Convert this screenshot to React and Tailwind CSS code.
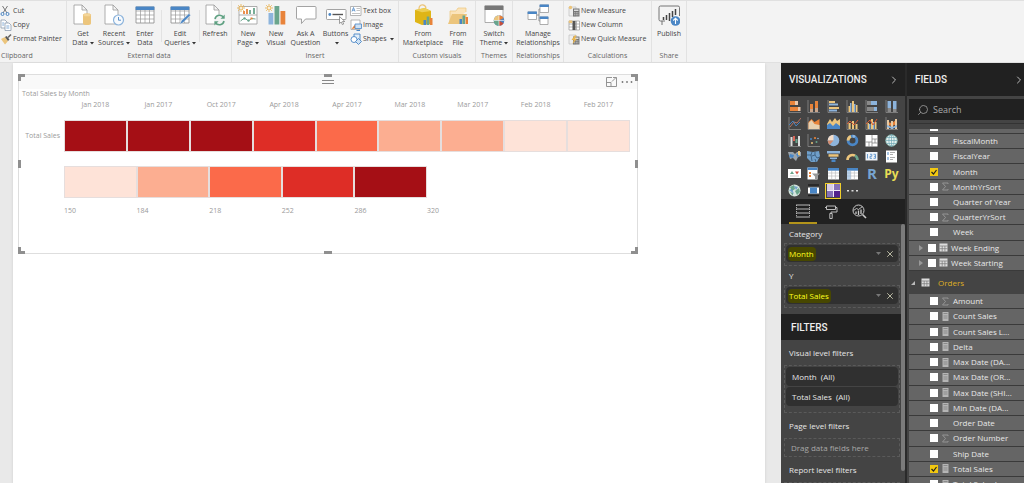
import { ChevronRight, Search, X } from "lucide-react";

const GREY = "#8a8a8a";
const BLUE = "#4a86c5";
const LIGHT_BLUE = "#8db4dc";
const ORANGE = "#e8833a";
const SAND = "#ecc57c";
const GREEN = "#6aa58c";

/* ---------- ribbon icons ---------- */

function PageShape({ x = 2 }) {
  return (
    <path d={`M${x} 1h8l5 5v14H${x}zM${x + 8} 1v5h5`} fill="#fff" stroke="#999" strokeWidth="0.8" />
  );
}

function BigIcon({ children }) {
  return (
    <svg viewBox="0 0 22 22" className="h-[22px] w-[22px] shrink-0" fill="none" aria-hidden="true">
      {children}
    </svg>
  );
}

function TableShape() {
  return (
    <>
      <path d="M2 3h18v16H2z" fill="#fff" stroke="#888" strokeWidth="0.8" />
      <path d="M2 7h18M2 11h18M2 15h18M6.500 3v16M11 3v16M15.500 3v16" stroke="#999" strokeWidth="0.7" />
      <path d="M1.600 2.500h18.800v3.500H1.600z" fill={BLUE} />
    </>
  );
}

function Spark() {
  return (
    <>
      <path d="M4 0v8M0 4h8M1.200 1.200l5.600 5.600M6.800 1.200L1.200 6.800" stroke="#e9b65a" strokeWidth="0.9" />
      <circle cx="4" cy="4" r="1.500" fill="#fff" stroke="#e9b65a" strokeWidth="0.7" />
    </>
  );
}

const bigIcons = {
  getData: (
    <>
      <PageShape />
      <path d="M11 11v8.500c0 2 8 2 8 0V11" fill={SAND} />
      <ellipse cx="15" cy="11" rx="4" ry="1.500" fill="#f4d79c" stroke={SAND} strokeWidth="0.6" />
    </>
  ),
  recent: (
    <>
      <PageShape />
      <circle cx="15.500" cy="16" r="5" fill="#f7fafd" stroke={LIGHT_BLUE} strokeWidth="1.200" />
      <path d="M15.500 13v3.200h2.500" stroke={BLUE} strokeWidth="0.9" />
    </>
  ),
  enter: <TableShape />,
  edit: (
    <>
      <TableShape />
      <path d="M10.500 20.500l2-4 7.500-7 1.600 1.700-7.500 7.400z" fill={BLUE} stroke="#f3f3f3" strokeWidth="0.5" />
    </>
  ),
  refresh: (
    <>
      <PageShape />
      <circle cx="15.500" cy="16" r="5.800" fill="#f3f3f3" />
      <path d="M11 15a4.600 4.600 0 0 1 8.600-1.300M20 17a4.600 4.600 0 0 1-8.600 1.300" stroke="#5fa182" strokeWidth="1.600" />
      <path d="M20.700 10.500v4.200h-4.200zM10.400 21.500v-4.200h4.200z" fill="#5fa182" />
    </>
  ),
  newPage: (
    <>
      <path d="M2 2.500h18v17.500H2zM2 11h18" fill="#fff" stroke="#999" strokeWidth="0.8" />
      <path d="M7 10V7M10 10V5" stroke={ORANGE} strokeWidth="1.800" />
      <path d="M13 10V6M17 10V4" stroke={GREEN} strokeWidth="1.800" />
      <path d="M3.500 17l4-3 4 3 3-2.500 4 .500" stroke={GREEN} strokeWidth="1" />
      <path d="M6.500 13.500h2v2h-2zM10.500 15.500h2v2h-2z" fill={GREEN} />
      <path d="M13.500 13.500h2v2h-2z" fill={ORANGE} />
      <Spark />
    </>
  ),
  newVisual: (
    <>
      <path d="M3.500 9h4.800v11.500H3.500z" fill={LIGHT_BLUE} />
      <path d="M9.500 2h4.800v18.500H9.500z" fill={GREEN} />
      <path d="M15.500 7h4.800v13.500h-4.800z" fill={ORANGE} />
      <Spark />
    </>
  ),
  ask: (
    <path d="M2.500 2.500h17.500q1 0 1 1V14q0 1-1 1H10.500L6.500 19.500V15H2.500q-1 0-1-1V3.500q0-1 1-1z" fill="#fff" stroke="#999" strokeWidth="0.9" />
  ),
  buttons: (
    <>
      <rect x="1.500" y="5.500" width="19.500" height="10" rx="0.8" fill="#fff" stroke="#999" strokeWidth="0.9" />
      <circle cx="4.800" cy="10.500" r="1.400" fill={BLUE} />
      <path d="M7.500 10.500H18" stroke="#555" strokeWidth="1.400" />
      <path d="M14.500 12.500v7l1.700-1.500 1.200 2.600 1.300-.6-1.200-2.500h2.300z" fill="#fff" stroke="#777" strokeWidth="0.7" />
    </>
  ),
  marketplace: (
    <>
      <path d="M7 5c0-5 6-5.500 7-1" stroke={SAND} strokeWidth="1.300" />
      <path d="M3 6l10-2 6 3v13l-9 1L3 18z" fill="#dfb516" />
      <path d="M3 6l10-2 6 3-9 1.200z" fill="#edcf55" />
      <path d="M11.500 21v-5h2.600v5z" fill={BLUE} />
      <path d="M14.700 21v-8.500h2.600V21z" fill={GREEN} />
      <path d="M17.900 21v-7h2.600v7z" fill={ORANGE} />
    </>
  ),
  file: (
    <>
      <path d="M3 19V7h6l2-3h8v4" fill="#fbe4bb" stroke={SAND} strokeWidth="0.7" />
      <path d="M1 20l4-10h15l-3 10z" fill={SAND} />
      <path d="M12.500 20v-5H15v5z" fill={BLUE} />
      <path d="M15.500 20v-8.500H18V20z" fill={GREEN} />
      <path d="M18.500 20v-7H21v7z" fill={ORANGE} />
    </>
  ),
  theme: (
    <>
      <path d="M2 2h18v16.500H2z" fill="#fff" stroke="#999" strokeWidth="0.8" />
      <path d="M1.600 1.600h18.800V6H1.600z" fill="#777" />
      <circle cx="16" cy="16.500" r="5.300" fill={BLUE} />
      <path d="M16 16.500V11.200a5.300 5.300 0 0 0-5.300 5.300z" fill={SAND} />
      <path d="M16 16.500h-5.300A5.300 5.300 0 0 0 16 21.800z" fill={GREEN} />
      <path d="M16 16.500V11.200a5.300 5.300 0 0 1 4.600 2.700z" fill={ORANGE} />
      <path d="M16 16.500l4.600 2.700A5.300 5.300 0 0 1 16 21.800z" fill="#c84e3b" />
      <path d="M16 11v11M10.700 16.500h10.600" stroke="#fff" strokeWidth="0.6" />
    </>
  ),
  relations: (
    <>
      <path d="M9 11h3V5h2M12 11v6h2" stroke="#888" strokeWidth="0.9" />
      <path d="M1 8h8.500v7.500H1zM13 1h8.500v7.500H13zM13 13h8v7.500h-8z" fill="#fff" stroke="#999" strokeWidth="0.8" />
      <path d="M.600 7.500h9.300V10H.600zM12.600.500h9.300V3h-9.300zM12.600 12.500h8.800V15h-8.800z" fill={BLUE} />
    </>
  ),
  publish: (
    <>
      <path d="M7 17H4v4M4 17H2.500Q1 17 1 15.500V3.500Q1 2 2.500 2H20q1.500 0 1.500 1.500V12" stroke="#666" strokeWidth="0.9" />
      <path d="M5.500 16v-3M8.500 16v-5M11.500 17V9M14.500 13V7M17.500 11V5" stroke="#444" strokeWidth="1.500" />
      <circle cx="17.500" cy="17" r="4.800" fill={BLUE} />
      <path d="M17.500 20v-5.500M15.300 16.500l2.200-2.300 2.200 2.300" stroke="#fff" strokeWidth="1.100" />
    </>
  ),
};

function SmallIcon({ children }) {
  return (
    <svg viewBox="0 0 12 12" className="h-3 w-3 shrink-0" fill="none" aria-hidden="true">
      {children}
    </svg>
  );
}

const calculator = (
  <>
    <path d="M5 3.500h6.500v8H5z" fill="#777" />
    <path d="M6 4.500h4.500v1.500H6z" fill="#ddd" />
    <path d="M6.200 7.800h4.300M6.200 9.800h4.300" stroke="#ddd" strokeWidth="0.9" strokeDasharray="1 .6" />
  </>
);

const smallIcons = {
  cut: (
    <>
      <path d="M2.500 1l4.500 7M7.500 1L3 8" stroke="#777" strokeWidth="1" />
      <circle cx="2.500" cy="9" r="1.500" stroke={BLUE} strokeWidth="1" />
      <circle cx="7.500" cy="9" r="1.500" stroke={BLUE} strokeWidth="1" />
    </>
  ),
  copy: (
    <>
      <path d="M1 1h4l2 2v6H1z" fill="#fff" stroke="#7f8fa5" strokeWidth="0.7" />
      <path d="M5 4h4l2 2v5.500H5z" fill="#fff" stroke="#7f8fa5" strokeWidth="0.7" />
      <path d="M2.200 4h2M2.200 6h2M6.300 7h3M6.300 9h3" stroke={BLUE} strokeWidth="0.7" />
    </>
  ),
  painter: (
    <>
      <path d="M1 6l4-2 3 4-3 3.500z" fill={SAND} />
      <path d="M5 4l1.500-1 3 3.500L8 8z" fill="#555" />
      <path d="M8 4.500L11 1.500" stroke="#666" strokeWidth="1.600" />
    </>
  ),
  textbox: (
    <>
      <path d="M.500 1.500h10.500v9H.500z" fill="#fff" stroke="#999" strokeWidth="0.7" />
      <path d="M2 6.500l1.500-4 1.500 4M2.500 5.200h2" stroke={BLUE} strokeWidth="0.8" />
      <path d="M6.500 3.500h3.500M6.500 5.500h3.500M2 8.500h8" stroke="#aaa" strokeWidth="0.7" />
    </>
  ),
  image: (
    <>
      <path d="M1 1h9v9.500H1z" fill="#fff" stroke="#999" strokeWidth="0.7" />
      <path d="M1.500 10l3-4 2.500 3z" fill={ORANGE} />
      <path d="M5 5h6.500v4.500H5z" fill="#cfe2f4" stroke={BLUE} strokeWidth="0.8" />
      <path d="M6.500 11.500h3.500" stroke={BLUE} />
    </>
  ),
  shapes: (
    <>
      <path d="M4 1h6v6H4z" fill="#e3eef8" stroke={BLUE} strokeWidth="0.9" />
      <circle cx="4" cy="6.500" r="3" fill="#fff" stroke={BLUE} strokeWidth="0.9" />
      <path d="M8.500 5.500l3 3-3 3-3-3z" fill="#cfe2f4" stroke={BLUE} strokeWidth="0.9" />
    </>
  ),
  measure: (
    <>
      <path d="M1 2h7v9H1z" fill="#eee" stroke="#bbb" strokeWidth="0.6" />
      <circle cx="2.500" cy="2.500" r="1.700" fill={SAND} />
      {calculator}
    </>
  ),
  column: (
    <>
      <path d="M1 2h10.500v9H1zM1 5h10.500M1 8h10.500M8.500 2v9" fill="#fff" stroke="#999" strokeWidth="0.7" />
      <path d="M4.500 2h3v9h-3z" fill="#555" />
      <path d="M.800 1.500h3.400V4H.800z" fill={SAND} />
    </>
  ),
  quick: (
    <>
      <path d="M1 2h7v9H1z" fill="#eee" stroke="#bbb" strokeWidth="0.6" />
      {calculator}
      <path d="M6.500 2.500L3.500 7h2.200L4.500 11 9 5.800H6.800L8.500 2.500z" fill="#eab64f" />
    </>
  ),
};

/* ---------- ribbon ---------- */

function Caret() {
  return (
    <svg viewBox="0 0 4 3" className="ml-0.5 inline-block h-[3px] w-1 align-middle" aria-hidden="true">
      <path d="M0 0h4L2 2.500z" fill="#333" />
    </svg>
  );
}

function BigButton({ icon, lines, caret, width }) {
  return (
    <button type="button" className={`flex flex-col items-center ${width}`}>
      <BigIcon>{bigIcons[icon]}</BigIcon>
      <span className="mt-[3px] text-center leading-[9px] whitespace-nowrap">
        {lines[0]}
        <br />
        {lines[1]}
        {caret && <Caret />}
      </span>
    </button>
  );
}

function SmallButton({ icon, label, caret }) {
  return (
    <button type="button" className="flex h-3.5 items-center gap-px whitespace-nowrap">
      <SmallIcon>{smallIcons[icon]}</SmallIcon>
      <span>{label}</span>
      {caret && <Caret />}
    </button>
  );
}

function RibbonGroup({ label, width, align = "text-center", children }) {
  return (
    <div className={`flex shrink-0 flex-col justify-between border-r border-[#e2e2e2] ${width}`}>
      <div className="flex justify-center pt-[3px]">{children}</div>
      <div className={`h-[11px] leading-[10px] text-[#666] ${align}`}>{label}</div>
    </div>
  );
}

function Divider() {
  return <div className="mt-1.5 h-8 w-px bg-[#e2e2e2]" />;
}

function Ribbon() {
  return (
    <header className="flex h-[63px] shrink-0 overflow-hidden border-y border-[#e0e0e0] bg-[#f3f3f3] text-[7px] text-[#444]">
      <RibbonGroup label="Clipboard" width="w-[67px]" align="pl-px text-left">
        <div className="flex flex-1 flex-col">
          <SmallButton icon="cut" label="Cut" />
          <SmallButton icon="copy" label="Copy" />
          <SmallButton icon="painter" label="Format Painter" />
        </div>
      </RibbonGroup>
      <RibbonGroup label="External data" width="w-[165px]">
        <BigButton icon="getData" lines={["Get", "Data"]} caret width="w-[31px]" />
        <BigButton icon="recent" lines={["Recent", "Sources"]} caret width="w-[31px]" />
        <BigButton icon="enter" lines={["Enter", "Data"]} width="w-[31px]" />
        <Divider />
        <BigButton icon="edit" lines={["Edit", "Queries"]} caret width="w-[37px]" />
        <Divider />
        <BigButton icon="refresh" lines={["Refresh", ""]} width="w-[31px]" />
      </RibbonGroup>
      <RibbonGroup label="Insert" width="w-[167px]">
        <BigButton icon="newPage" lines={["New", "Page"]} caret width="w-[28px]" />
        <BigButton icon="newVisual" lines={["New", "Visual"]} width="w-[28px]" />
        <BigButton icon="ask" lines={["Ask A", "Question"]} width="w-[31px]" />
        <BigButton icon="buttons" lines={["Buttons", ""]} caret width="w-[29px]" />
        <div className="flex w-[46px] flex-col">
          <SmallButton icon="textbox" label="Text box" />
          <SmallButton icon="image" label="Image" />
          <SmallButton icon="shapes" label="Shapes" caret />
        </div>
      </RibbonGroup>
      <RibbonGroup label="Custom visuals" width="w-[77px]">
        <BigButton icon="marketplace" lines={["From", "Marketplace"]} width="w-[42px]" />
        <BigButton icon="file" lines={["From", "File"]} width="w-[28px]" />
      </RibbonGroup>
      <RibbonGroup label="Themes" width="w-[37px]">
        <BigButton icon="theme" lines={["Switch", "Theme"]} caret width="w-[31px]" />
      </RibbonGroup>
      <RibbonGroup label="Relationships" width="w-[51px]">
        <BigButton icon="relations" lines={["Manage", "Relationships"]} width="w-[46px]" />
      </RibbonGroup>
      <RibbonGroup label="Calculations" width="w-[88px]">
        <div className="flex flex-1 flex-col pl-1">
          <SmallButton icon="measure" label="New Measure" />
          <SmallButton icon="column" label="New Column" />
          <SmallButton icon="quick" label="New Quick Measure" />
        </div>
      </RibbonGroup>
      <RibbonGroup label="Share" width="w-[35px]">
        <BigButton icon="publish" lines={["Publish", ""]} width="w-[31px]" />
      </RibbonGroup>
    </header>
  );
}

/* ---------- heat map visual ---------- */

const months = [
  { label: "Jan 2018", fill: "bg-[#a50f15]" },
  { label: "Jan 2017", fill: "bg-[#a50f15]" },
  { label: "Oct 2017", fill: "bg-[#a50f15]" },
  { label: "Apr 2018", fill: "bg-[#de2d26]" },
  { label: "Apr 2017", fill: "bg-[#fb6a4a]" },
  { label: "Mar 2018", fill: "bg-[#fcae91]" },
  { label: "Mar 2017", fill: "bg-[#fcae91]" },
  { label: "Feb 2018", fill: "bg-[#fee3d8]" },
  { label: "Feb 2017", fill: "bg-[#fee3d8]" },
];

const scale = [
  { from: 150, fill: "bg-[#fee3d8]" },
  { from: 184, fill: "bg-[#fcae91]" },
  { from: 218, fill: "bg-[#fb6a4a]" },
  { from: 252, fill: "bg-[#de2d26]" },
  { from: 286, fill: "bg-[#a50f15]" },
];

const handles = [
  "-top-px -left-px h-[7px] w-[7px] border-t-3 border-l-3",
  "-top-px -right-px h-[7px] w-[7px] border-t-3 border-r-3",
  "-bottom-px -left-px h-[7px] w-[7px] border-b-3 border-l-3",
  "-bottom-px -right-px h-[7px] w-[7px] border-b-3 border-r-3",
  "-top-px left-1/2 w-2 -translate-x-1/2 border-t-3",
  "-bottom-px left-1/2 w-2 -translate-x-1/2 border-b-3",
  "top-1/2 -left-px h-2 -translate-y-1/2 border-l-3",
  "top-1/2 -right-px h-2 -translate-y-1/2 border-r-3",
];

function HeatMap() {
  return (
    <article className="relative flex h-[180px] w-[620px] max-w-full flex-col border border-[#dedede] bg-white text-[7px] leading-[10px] text-[#9a9a9a]">
      {handles.map((place) => (
        <span key={place} className={`absolute border-[#8f8f8f] ${place}`} />
      ))}
      <div className="grid h-3.5 shrink-0 grid-cols-3 items-center bg-[#f9f9f9]">
        <div className="col-start-2 h-1 w-3 justify-self-center border-y border-[#888]" />
        <div className="flex items-center gap-1 justify-self-end pr-1">
          <button type="button" aria-label="Focus mode">
            <svg viewBox="0 0 11 10" className="h-2.5 w-[11px]" fill="none" stroke="#888" strokeWidth="0.9">
              <path d="M6 .500H.500v9h10V4M.500 5.500H5v4M6 4.500l4-4M7 .500h3.500V4" />
            </svg>
          </button>
          <button type="button" aria-label="More options">
            <svg viewBox="0 0 12 10" className="h-2.5 w-3" fill="#777">
              <circle cx="1.500" cy="5" r="0.9" />
              <circle cx="6" cy="5" r="0.9" />
              <circle cx="10.500" cy="5" r="0.9" />
            </svg>
          </button>
        </div>
      </div>
      <h2 className="pl-[3px]">Total Sales by Month</h2>
      <div className="grid grid-cols-[45px_1fr] pr-[7px]">
        <div className="col-start-2 grid grid-cols-9 pt-px text-center">
          {months.map((m) => (
            <span key={m.label}>{m.label}</span>
          ))}
        </div>
        <span className="mt-2.5 self-center pr-1 text-right whitespace-nowrap">Total Sales</span>
        <div className="mt-2.5 grid h-8 grid-cols-9">
          {months.map((m) => (
            <div key={m.label} className={`border border-[#e6dedd] ${m.fill}`} />
          ))}
        </div>
        <div className="col-start-2 mt-3.5 flex h-8 w-[363px]">
          {scale.map((s) => (
            <div key={s.from} className={`flex-1 border border-[#e6dedd] ${s.fill}`} />
          ))}
        </div>
        <div className="col-start-2 mt-2 flex w-[363px]">
          {scale.map((s) => (
            <span key={s.from} className="flex-1">
              {s.from}
            </span>
          ))}
          <span className="w-0">320</span>
        </div>
      </div>
    </article>
  );
}

/* ---------- visualizations pane ---------- */

const axis = <path d="M1 0v12.500h12" stroke="#8c8c8c" strokeWidth="0.8" />;
const grid = (
  <>
    <path d="M1 1h11v11.500H1z" fill="#fff" />
    <path d="M1 6h11M1 9h11M4.700 3.500v9M8.400 3.500v9" stroke="#b5b5b5" strokeWidth="0.6" />
    <path d="M1 1h11v2.700H1z" fill={BLUE} />
  </>
);

const visuals = [
  ["Stacked bar chart", <>{axis}<path d="M2 1h5v4H2zM2 7h8v4H2z" fill={ORANGE} /><path d="M7 1h3v4H7zM10 7h2.500v4H10z" fill="#e9c8ad" /></>],
  ["Stacked column chart", <>{axis}<path d="M3 4h3v5H3zM8 1h3v8H8z" fill={ORANGE} /><path d="M3 9h3v3H3zM8 8h3v4H8z" fill="#c9a58b" /></>],
  ["Clustered bar chart", <>{axis}<path d="M2 1h6v2H2zM2 7h10v2H2z" fill={SAND} /><path d="M2 3.500h9v2H2zM2 9.500h8v2H2z" fill={LIGHT_BLUE} /></>],
  ["Clustered column chart", <>{axis}<path d="M2.500 6H4v6H2.500zM6 1h2v11H6zM10 5h1.500v7H10z" fill={SAND} /><path d="M4 3h1.500v9H4zM8 4h1.500v8H8z" fill={LIGHT_BLUE} /></>],
  ["100% stacked bar chart", <>{axis}<path d="M2 1h4v4H2zM2 7h7v4H2z" fill={GREY} /><path d="M6 1h6v4H6zM9 7h3v4H9z" fill={LIGHT_BLUE} /></>],
  ["100% stacked column chart", <>{axis}<path d="M2.500 1H6v7H2.500zM8 1h3.500v8H8z" fill={LIGHT_BLUE} /><path d="M2.500 8H6v4H2.500zM8 9h3.500v3H8z" fill={GREY} /></>],
  ["Line chart", <>{axis}<path d="M2 10l4-5 3 1 4-5" stroke="#c07868" strokeWidth="0.9" /><path d="M1 8l4-4 3 5 4-4" stroke={BLUE} strokeWidth="0.9" /></>],
  ["Area chart", <>{axis}<path d="M1.500 12V5l3-3 3 3 5-3v10z" fill={ORANGE} /><path d="M1.500 12V6l3-3 3 4 5 1v4z" fill="#e7d0b0" /></>],
  ["Stacked area chart", <><path d="M0 7l3-5 2 3 3-4 2 3 3-2v7H0z" fill={SAND} /><path d="M0 12V8l3-2 3 3 3-3 4 3v3z" fill={BLUE} /></>],
  ["Line and stacked column chart", <>{axis}<path d="M2.500 6h2.200v6H2.500zM6 4h2v8H6zM9.500 7h2v5h-2z" fill={SAND} /><path d="M1 7l3-3 4 4 4-5" stroke="#d85c35" /></>],
  ["Line and clustered column chart", <>{axis}<path d="M2.500 6H4v6H2.500zM6 2h2v10H6zM10 5h1.500v7H10z" fill={SAND} /><path d="M4 7h1.500v5H4zM8 5h1.500v7H8z" fill={LIGHT_BLUE} /><path d="M1 7l4-4 3 5 4-6" stroke="#d85c35" /></>],
  ["Ribbon chart", <>{axis}<path d="M2 5l5 1 5-4v5L7 9 2 8z" fill={ORANGE} /><path d="M2 3h2v9H2zM6 4h2v8H6zM10 2h2v10h-2z" fill="#e7c9a2" /><path d="M2 8l5 2 5-2v2l-5 2-5-2z" fill={LIGHT_BLUE} /></>],
  ["Waterfall chart", <>{axis}<path d="M2.500 3h2v9h-2z" fill="#ddd" /><path d="M5 2h2v5H5z" fill="#d8675a" /><path d="M7.500 5h2v4h-2z" fill={GREEN} /><path d="M10 2h2v10h-2z" fill="#ddd" /></>],
  ["Scatter chart", <>{axis}<circle cx="4" cy="5" r="1" fill={BLUE} /><circle cx="8" cy="4" r="1.100" fill={ORANGE} /><circle cx="5" cy="9" r="1" fill={SAND} /><circle cx="9.500" cy="8" r="1" fill={GREEN} /><circle cx="11" cy="4.500" r="0.8" fill={LIGHT_BLUE} /></>],
  ["Pie chart", <><circle cx="6.500" cy="6.500" r="5.800" fill={LIGHT_BLUE} /><path d="M6.500 6.500V.700A5.800 5.800 0 0 0 .700 6.500z" fill="#f3dcc8" /><path d="M6.500 6.500H.700a5.800 5.800 0 0 0 2 4.300z" fill="#d28b6e" /></>],
  ["Donut chart", <><circle cx="6.500" cy="6.500" r="4.400" stroke={BLUE} strokeWidth="2.800" /><path d="M2.100 6.500A4.400 4.400 0 0 1 5 2.400" stroke={SAND} strokeWidth="2.800" /><path d="M6.500 2.100A4.400 4.400 0 0 1 9 3" stroke={LIGHT_BLUE} strokeWidth="2.800" /></>],
  ["Treemap", <><path d="M.500 1h12v11.500H.500z" fill="#fff" /><path d="M7 1v11.500M.500 8H7M7 5h5.500M7 9h5.500M10 5v4M4 8v4.500" stroke="#777" strokeWidth="0.7" /></>],
  ["Map", <><circle cx="6.500" cy="6.500" r="5.800" fill="#e4f0ef" stroke="#7fb0a6" strokeWidth="0.8" /><ellipse cx="6.500" cy="6.500" rx="2.600" ry="5.800" stroke="#6fa7b5" strokeWidth="0.7" /><path d="M.700 6.500h11.600M1.700 3.500h9.600M1.700 9.500h9.600M6.500.700v11.600" stroke="#6fa7b5" strokeWidth="0.7" /></>],
  ["Filled map", <><path d="M0 2h5l2 2 2-2h4v4l-3 1-2 4-3-3-3 1z" fill="#9ca4ab" /><path d="M2 4l4 1-1 3-4-1zM8 4l3-1-1 5z" fill={BLUE} /><path d="M10 1h2v4h-2z" fill={SAND} /></>],
  ["Shape map", <><path d="M0 1l6 1 6-1 1 5-3 6H4L0 8z" fill="#6f9fca" /><path d="M0 5h4l1-3M5 6l3-1 2 3 3-1M4 5l1 6M8 2v3M8 9l1 3" stroke="#3d5e7d" strokeWidth="0.9" /></>],
  ["Funnel", <><path d="M0 1h13v2.500H0zM3 7.500h7V9H3z" fill={LIGHT_BLUE} /><path d="M1.500 4.200h10v2.500h-10z" fill={SAND} /><path d="M4.500 9.500h4V12h-4z" fill={BLUE} /></>],
  ["Gauge", <><path d="M1.500 10a5 5 0 0 1 7.500-4.300" stroke={SAND} strokeWidth="2.600" /><path d="M9 5.700A5 5 0 0 1 11.500 10" stroke={GREEN} strokeWidth="2.600" /></>],
  ["Card", <><path d="M.500 2h12v8.500H.500z" fill="#eef3f8" /><path d="M2.500 4v4.500M5 4.300h1.800v2H5v2h2M8.500 4.300h2v4h-2M9 6.300h1.500" stroke={BLUE} strokeWidth="0.8" /></>],
  ["Multi-row card", <><path d="M1 .500h11v12H1z" fill="#fff" /><path d="M3 2v3M3 7v3" stroke={BLUE} /><path d="M5 2.500h5M5 4.500h3M5 7.500h5M5 9.500h3" stroke="#999" strokeWidth="0.8" /></>],
  ["KPI", <><path d="M0 2h13v9H0z" fill="#fff" /><path d="M2 7l2-3 2 3z" fill={GREEN} /><path d="M7 4.500h4L9 7.500z" fill="#d25145" /><path d="M2 9h9" stroke="#bbb" strokeWidth="0.8" /></>],
  ["Slicer", <><path d="M.500.500h10v12H.500z" fill="#fff" /><path d="M.500.500h10V3H.500z" fill={BLUE} /><path d="M2 5h2v2H2zM2 8h2v2H2z" fill={ORANGE} /><path d="M5 6.500h8L10 9.500V13L8 12V9.500z" fill="#999" /></>],
  ["Table", grid],
  ["Matrix", <>{grid}<path d="M1 3.700h3.700v8.800H1z" fill={LIGHT_BLUE} opacity="0.6" /></>],
  ["R script visual", "R"],
  ["Python visual", "Py"],
  ["ArcGIS map", <><circle cx="6.500" cy="6.500" r="6" fill="#d5e5dd" /><path d="M2 3l4-2 1 4-3 2zM7 7l4-3 1 4-3 3zM2 8l3 1v3z" fill={GREEN} /><path d="M6 2l4 1-2 3zM1 6l3-1 2 5z" fill={BLUE} opacity="0.7" /></>],
  ["Custom filter", <><path d="M1 1h11M1 11.500h11" stroke="#222" strokeWidth="1.500" /><path d="M1 3.500h11v6H1z" fill="#fff" /><path d="M3 3.500h7v6H3z" fill={BLUE} /></>],
  ["Heat map", <><path d="M0 0h13v13H0z" fill="#efeaf6" /><path d="M0 0h6v6H0z" fill="#d7cde8" /><path d="M7 0h6v6H7zM0 7h6v6H0z" fill="#8672b8" /><path d="M7 7h6v6H7z" fill="#52238c" /></>],
  ["Import a custom visual", <path d="M1 6h2v1.500H1zM5.500 6h2v1.500h-2zM10 6h2v1.500h-2z" fill="#ddd" />],
];

function VisualButton({ name, icon }) {
  let face;
  if (icon === "R") {
    face = <span className="text-[15px] leading-none font-bold text-[#78a5d0]">R</span>;
  } else if (icon === "Py") {
    face = <span className="text-[12px] leading-none font-bold text-[#e8dc55]">Py</span>;
  } else {
    face = (
      <svg viewBox="0 0 13 13" className="h-[13px] w-[13px]" fill="none" aria-hidden="true">
        {icon}
      </svg>
    );
  }
  const selected = name === "Heat map" ? "outline outline-[#f0cf2c]" : "";
  return (
    <button
      type="button"
      aria-label={name}
      className={`flex h-3.5 w-3.5 items-center justify-center place-self-center ${selected}`}
    >
      {face}
    </button>
  );
}

function PaneHeader({ title }) {
  return (
    <div className="flex h-[33px] shrink-0 items-center justify-between bg-[#212121] pr-[5px] pl-2">
      <h2 className="font-[Roboto,sans-serif] text-[10px] font-medium text-[#eee]">{title}</h2>
      <button type="button" aria-label={`Collapse ${title}`}>
        <ChevronRight size={12} strokeWidth={2} className="text-[#bbb]" />
      </button>
    </div>
  );
}

function Well({ name }) {
  return (
    <div className="mr-px ml-[3px] shrink-0 border border-dashed border-[#5a5a5a] px-px pt-px pb-[3px]">
      <div className="flex h-[17px] items-center rounded-sm bg-[#303030] pr-[3px] pl-0.5">
        <span className="rounded-sm bg-[#474700] py-0.5 pr-0.5 pl-px leading-[10px] text-[#ffff1e]">{name}</span>
        <button type="button" aria-label={`${name} options`} className="ml-auto">
          <svg viewBox="0 0 5 3" className="h-[3px] w-[5px]">
            <path d="M0 0h5L2.500 3z" fill="#777" />
          </svg>
        </button>
        <button type="button" aria-label={`Remove ${name}`} className="ml-1">
          <X size={10} strokeWidth={2.2} className="text-[#c4c4ac]" />
        </button>
      </div>
    </div>
  );
}

function PaneLabel({ children }) {
  return <h3 className="flex h-[19px] shrink-0 items-center pl-2">{children}</h3>;
}

function Visualizations() {
  return (
    <section className="flex w-[124px] shrink-0 flex-col overflow-hidden bg-[#444] text-[8px] text-[#e6e6e6]">
      <PaneHeader title="VISUALIZATIONS" />
      <div className="grid h-[103px] shrink-0 grid-cols-6 grid-rows-6 px-1 pt-0.5">
        {visuals.map(([name, icon]) => (
          <VisualButton key={name} name={name} icon={icon} />
        ))}
      </div>
      <div className="flex h-[25px] shrink-0 bg-[#212121] pl-2">
        <button type="button" aria-label="Fields" className="flex w-7 items-center justify-center border-b-2 border-[#b3941b]">
          <svg viewBox="0 0 14 14" className="h-3.5 w-3.5" fill="none" stroke="#ccc">
            <path d="M0 1h14M0 5h14M0 9h14M0 13h14" strokeWidth="0.9" />
            <path d="M.500 1v12M13.500 1v12" strokeWidth="0.8" strokeDasharray="1 1" />
          </svg>
        </button>
        <button type="button" aria-label="Format" className="flex w-7 items-center justify-center">
          <svg viewBox="0 0 14 14" className="h-3.5 w-3.5" fill="none" stroke="#ccc" strokeWidth="0.9">
            <path d="M2.500 1h9v3.500h-9zM11.500 2.500H13V7H7v1.500M5.800 8.500h2.400v5H5.800zM2.500 2.500H1" />
          </svg>
        </button>
        <button type="button" aria-label="Analytics" className="flex w-7 items-center justify-center">
          <svg viewBox="0 0 15 15" className="h-[15px] w-[15px]" fill="none" stroke="#ccc">
            <circle cx="6.500" cy="6.500" r="5.500" strokeWidth="1" />
            <path d="M10.500 10.500L14 14" strokeWidth="1.600" />
            <path d="M4 10V7.500M6.500 11V6.500M9 10V5.500" strokeWidth="1.300" />
            <path d="M1.500 6.500l3-2 2 1 4-3" strokeWidth="0.9" />
          </svg>
        </button>
      </div>
      <div className="flex min-h-0 flex-1">
        <div className="flex min-w-0 flex-1 flex-col overflow-hidden">
          <PaneLabel>Category</PaneLabel>
          <Well name="Month" />
          <PaneLabel>Y</PaneLabel>
          <Well name="Total Sales" />
          <h2 className="mt-1.5 mb-[3px] flex h-[26px] shrink-0 items-center bg-[#212121] pl-2.5 font-[Roboto,sans-serif] text-[10px] font-medium text-[#eee]">
            FILTERS
          </h2>
          <PaneLabel>Visual level filters</PaneLabel>
          <div className="mt-[3px] mr-px mb-[3px] ml-[3px] flex shrink-0 flex-col gap-px border border-dashed border-[#5a5a5a] px-px pt-px pb-1.5">
            {["Month", "Total Sales"].map((name) => (
              <button key={name} type="button" className="flex h-[19px] shrink-0 items-center rounded-sm bg-[#303030] pl-1.5">
                {name}&nbsp; (All)
              </button>
            ))}
          </div>
          <PaneLabel>Page level filters</PaneLabel>
          <div className="mt-[3px] mr-px mb-[3px] ml-[3px] flex h-[19px] shrink-0 items-center border border-dashed border-[#5a5a5a] pl-1.5 text-[#a8a8a8]">
            Drag data fields here
          </div>
          <PaneLabel>Report level filters</PaneLabel>
          <div className="mt-[3px] mr-px ml-[3px] h-[19px] shrink-0 border border-dashed border-[#5a5a5a]" />
        </div>
        <div className="mb-3 w-1 shrink-0 rounded-full bg-[#7b7b7b]" />
      </div>
    </section>
  );
}

/* ---------- fields pane ---------- */

const dateFields = [
  { name: "FiscalMonth" },
  { name: "FiscalYear" },
  { name: "Month", checked: true },
  { name: "MonthYrSort", icon: "sum" },
  { name: "Quarter of Year" },
  { name: "QuarterYrSort", icon: "sum" },
  { name: "Week" },
  { name: "Week Ending", icon: "table" },
  { name: "Week Starting", icon: "table" },
];

const orderFields = [
  { name: "Amount", icon: "sum" },
  { name: "Count Sales", icon: "measure" },
  { name: "Count Sales L...", icon: "measure" },
  { name: "Delta", icon: "measure" },
  { name: "Max Date (DA...", icon: "measure" },
  { name: "Max Date (OR...", icon: "measure" },
  { name: "Max Date (SHI...", icon: "measure" },
  { name: "Min Date (DA...", icon: "measure" },
  { name: "Order Date" },
  { name: "Order Number", icon: "sum" },
  { name: "Ship Date" },
  { name: "Total Sales", icon: "measure", checked: true },
];

const fieldIcons = {
  sum: <path d="M7 2V1H1.500L4.500 4.500 1.500 8H7V7" fill="none" stroke="#999" strokeWidth="0.9" />,
  measure: (
    <>
      <path d="M1.500 0h6v9h-6z" fill="#b5b5b5" />
      <path d="M2.500 1.500h4M2.500 4h4M2.500 6h4" stroke="#777" strokeWidth="0.7" />
    </>
  ),
  table: (
    <>
      <path d="M.500.500h8v8h-8z" fill="#ddd" />
      <path d="M.500 3h8M.500 5.700h8M3.200 3v5.500M5.900 3v5.500" stroke="#777" strokeWidth="0.7" />
    </>
  ),
};

function FieldIcon({ kind }) {
  return (
    <svg viewBox="0 0 9 9" className="h-[9px] w-[9px] shrink-0" aria-hidden="true">
      {fieldIcons[kind]}
    </svg>
  );
}

function FieldRow({ name, icon, checked }) {
  const nested = icon === "table";
  return (
    <li className="flex min-h-0 items-center border-b border-[#3a3a3a] bg-[#656565] whitespace-nowrap">
      <span className={`flex shrink-0 items-center pl-2.5 ${nested ? "w-[19px]" : "w-[21px]"}`}>
        {nested && (
          <svg viewBox="0 0 4 6" className="h-1.5 w-1">
            <path d="M0 0l4 3-4 3z" fill="#999" />
          </svg>
        )}
      </span>
      <label className="flex items-center gap-[3px]">
        <span className="relative flex">
          <input
            type="checkbox"
            defaultChecked={checked}
            className="peer size-2 appearance-none bg-white checked:bg-[#f2c811]"
          />
          <svg
            viewBox="0 0 8 8"
            className="pointer-events-none absolute inset-0 hidden size-2 peer-checked:block"
            fill="none"
            stroke="#222"
            strokeWidth="1.200"
          >
            <path d="M1.500 4l2 2 3-4" />
          </svg>
        </span>
        <FieldIcon kind={icon} />
        <span>{name}</span>
      </label>
    </li>
  );
}

function Fields() {
  return (
    <section className="ml-0.5 flex w-[117px] shrink-0 flex-col overflow-hidden bg-[#444] text-[8px] text-[#e8e8e8]">
      <div className="-mr-1.5">
        <PaneHeader title="FIELDS" />
      </div>
      <label className="mt-[3px] ml-0.5 flex h-[21px] shrink-0 items-center gap-1 bg-[#212121] pl-2">
        <Search size={12} strokeWidth={1.5} className="shrink-0 -scale-x-100 text-[#aaa]" />
        <input
          type="text"
          placeholder="Search"
          aria-label="Search fields"
          className="w-full min-w-0 bg-transparent text-[9px] outline-none placeholder:text-[#aaa]"
        />
      </label>
      <div className="mt-[3px] ml-0.5 flex min-h-0 flex-1 flex-col overflow-hidden border-t border-[#333] pt-[5px]">
        <div className="h-[5px] shrink-0 border-b border-[#3a3a3a] bg-[#656565] pl-[21px]">
          <div className="h-0.5 w-2 bg-white" />
        </div>
        <ul className="grid h-[137px] shrink-0 auto-rows-fr">
          {dateFields.map((f) => (
            <FieldRow key={f.name} {...f} />
          ))}
        </ul>
        <div className="flex h-[23px] shrink-0 items-center text-[#deae25]">
          <button type="button" aria-label="Collapse Orders" className="ml-0.5">
            <svg viewBox="0 0 4 4" className="h-1 w-1">
              <path d="M4 0v4H0z" fill="#bbb" />
            </svg>
          </button>
          <span className="mr-2 ml-1.5 flex">
            <FieldIcon kind="table" />
          </span>
          Orders
        </div>
        <ul className="grid h-[183px] shrink-0 auto-rows-fr">
          {orderFields.map((f) => (
            <FieldRow key={f.name} {...f} />
          ))}
        </ul>
        <ul className="grid h-[15px] shrink-0">
          <FieldRow name="Total Sales L..." icon="measure" />
        </ul>
      </div>
    </section>
  );
}

export default function App() {
  return (
    <div className="flex h-screen flex-col overflow-hidden bg-[#e9e9e9] font-['Open_Sans',sans-serif]">
      <Ribbon />
      <div className="flex min-h-0 flex-1">
        <main className="mr-4 ml-[13px] min-w-0 flex-1 bg-white pt-[11px] pl-[5px] shadow-sm">
          <HeatMap />
        </main>
        <div className="flex shrink-0 bg-[#2a2a2a]">
          <Visualizations />
          <Fields />
        </div>
      </div>
    </div>
  );
}
